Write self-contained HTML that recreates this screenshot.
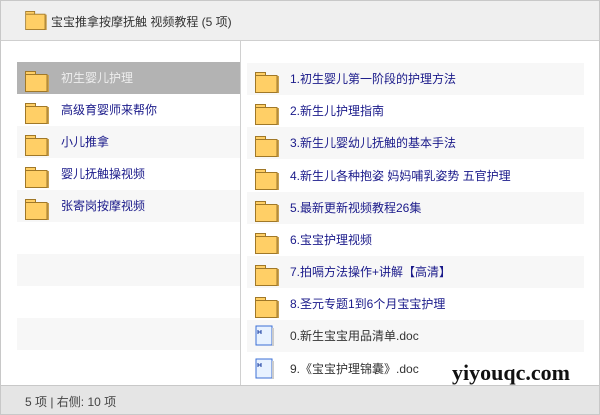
<!DOCTYPE html>
<html><head><meta charset="utf-8"><style>
*{margin:0;padding:0;box-sizing:border-box}
body{width:600px;height:415px;overflow:hidden;background:#fff;font-family:"Liberation Sans","Noto Sans CJK SC",sans-serif;font-size:12px;position:relative}
.frame{position:absolute;left:0;top:0;width:600px;height:415px;border:1px solid #c8c8c8}
.hdr{position:absolute;left:0;top:0;width:600px;height:41px;background:#efefef;border:1px solid #c8c8c8;border-bottom:1px solid #cfcfcf}
.hdr span{position:absolute;left:50px;top:12px;color:#333;font-size:12px}
.div{position:absolute;left:240px;top:41px;width:1px;height:344px;background:#d0d0d0}
.row{position:absolute;height:32px;line-height:32px;color:#1a1a8a}
.l{left:17px;width:223px}
.r{left:247px;width:337px}
.s{background:#f7f7f7}
.sel{background:#b3b3b3;color:#eee}
.row span{position:absolute;top:0}
.l span{left:44px}
.r span{left:43px}
.f{position:absolute;width:24px;height:21px;top:9px;left:8px}
.ftr{position:absolute;left:0;top:385px;width:600px;height:30px;background:#e5e5e5;border:1px solid #c8c8c8}
.ftr span{position:absolute;left:24px;top:7px;color:#444}
.wm{position:absolute;left:452px;top:360px;font-family:"Liberation Serif",serif;font-weight:bold;font-size:22px;color:#111}
</style></head><body>
<svg width="0" height="0" style="position:absolute"><defs>
<symbol id="fd" viewBox="0 0 24 21"><rect x="22" y="4" width="2" height="17" fill="#c8a050"/><path d="M0.5 0.5h10v3h11.5v17h-21.5z" fill="#ffcf66" stroke="#a07828"/><path d="M1 3.5h10" stroke="#a07828"/></symbol>
<symbol id="dc" viewBox="0 0 20 22"><rect x="1" y="1" width="16" height="19" fill="#e8f2ff" stroke="#3b6fd6"/><rect x="17" y="3" width="2" height="18" fill="#ccc"/><path d="M3 5v4M6 5v4M3 7h3" stroke="#1a3ea0" stroke-width="1"/></symbol>
</defs></svg>
<div class="frame"></div>
<div class="hdr"><svg style="position:absolute;left:24px;top:10px" width="22" height="19" viewBox="0 0 24 21"><use href="#fd"/></svg><span>宝宝推拿按摩抚触 视频教程 (5 项)</span></div>
<div class="div"></div>
<div class="row l sel" style="top:62px"><svg class="f"><use href="#fd"/></svg><span>初生婴儿护理</span></div>
<div class="row l" style="top:94px"><svg class="f"><use href="#fd"/></svg><span>高级育婴师来帮你</span></div>
<div class="row l s" style="top:126px"><svg class="f"><use href="#fd"/></svg><span>小儿推拿</span></div>
<div class="row l" style="top:158px"><svg class="f"><use href="#fd"/></svg><span>婴儿抚触操视频</span></div>
<div class="row l s" style="top:190px"><svg class="f"><use href="#fd"/></svg><span>张寄岗按摩视频</span></div>
<div class="row l s" style="top:254px"></div>
<div class="row l s" style="top:318px"></div>
<div class="row r s" style="top:63px"><svg class="f"><use href="#fd"/></svg><span>1.初生婴儿第一阶段的护理方法</span></div>
<div class="row r" style="top:95px"><svg class="f"><use href="#fd"/></svg><span>2.新生儿护理指南</span></div>
<div class="row r s" style="top:127px"><svg class="f"><use href="#fd"/></svg><span>3.新生儿婴幼儿抚触的基本手法</span></div>
<div class="row r" style="top:160px"><svg class="f"><use href="#fd"/></svg><span>4.新生儿各种抱姿 妈妈哺乳姿势 五官护理</span></div>
<div class="row r s" style="top:192px"><svg class="f"><use href="#fd"/></svg><span>5.最新更新视频教程26集</span></div>
<div class="row r" style="top:224px"><svg class="f"><use href="#fd"/></svg><span>6.宝宝护理视频</span></div>
<div class="row r s" style="top:256px"><svg class="f"><use href="#fd"/></svg><span>7.拍嗝方法操作+讲解【高清】</span></div>
<div class="row r" style="top:288px"><svg class="f"><use href="#fd"/></svg><span>8.圣元专题1到6个月宝宝护理</span></div>
<div class="row r s" style="top:320px;color:#333"><svg class="f" style="top:5px;width:20px;height:22px" viewBox="0 0 20 22"><use href="#dc"/></svg><span>0.新生宝宝用品清单.doc</span></div>
<div class="row r" style="top:353px;color:#333"><svg class="f" style="top:5px;width:20px;height:22px" viewBox="0 0 20 22"><use href="#dc"/></svg><span>9.《宝宝护理锦囊》.doc</span></div>
<div class="wm">yiyouqc.com</div>
<div class="ftr"><span>5 项 | 右侧: 10 项</span></div>
</body></html>
